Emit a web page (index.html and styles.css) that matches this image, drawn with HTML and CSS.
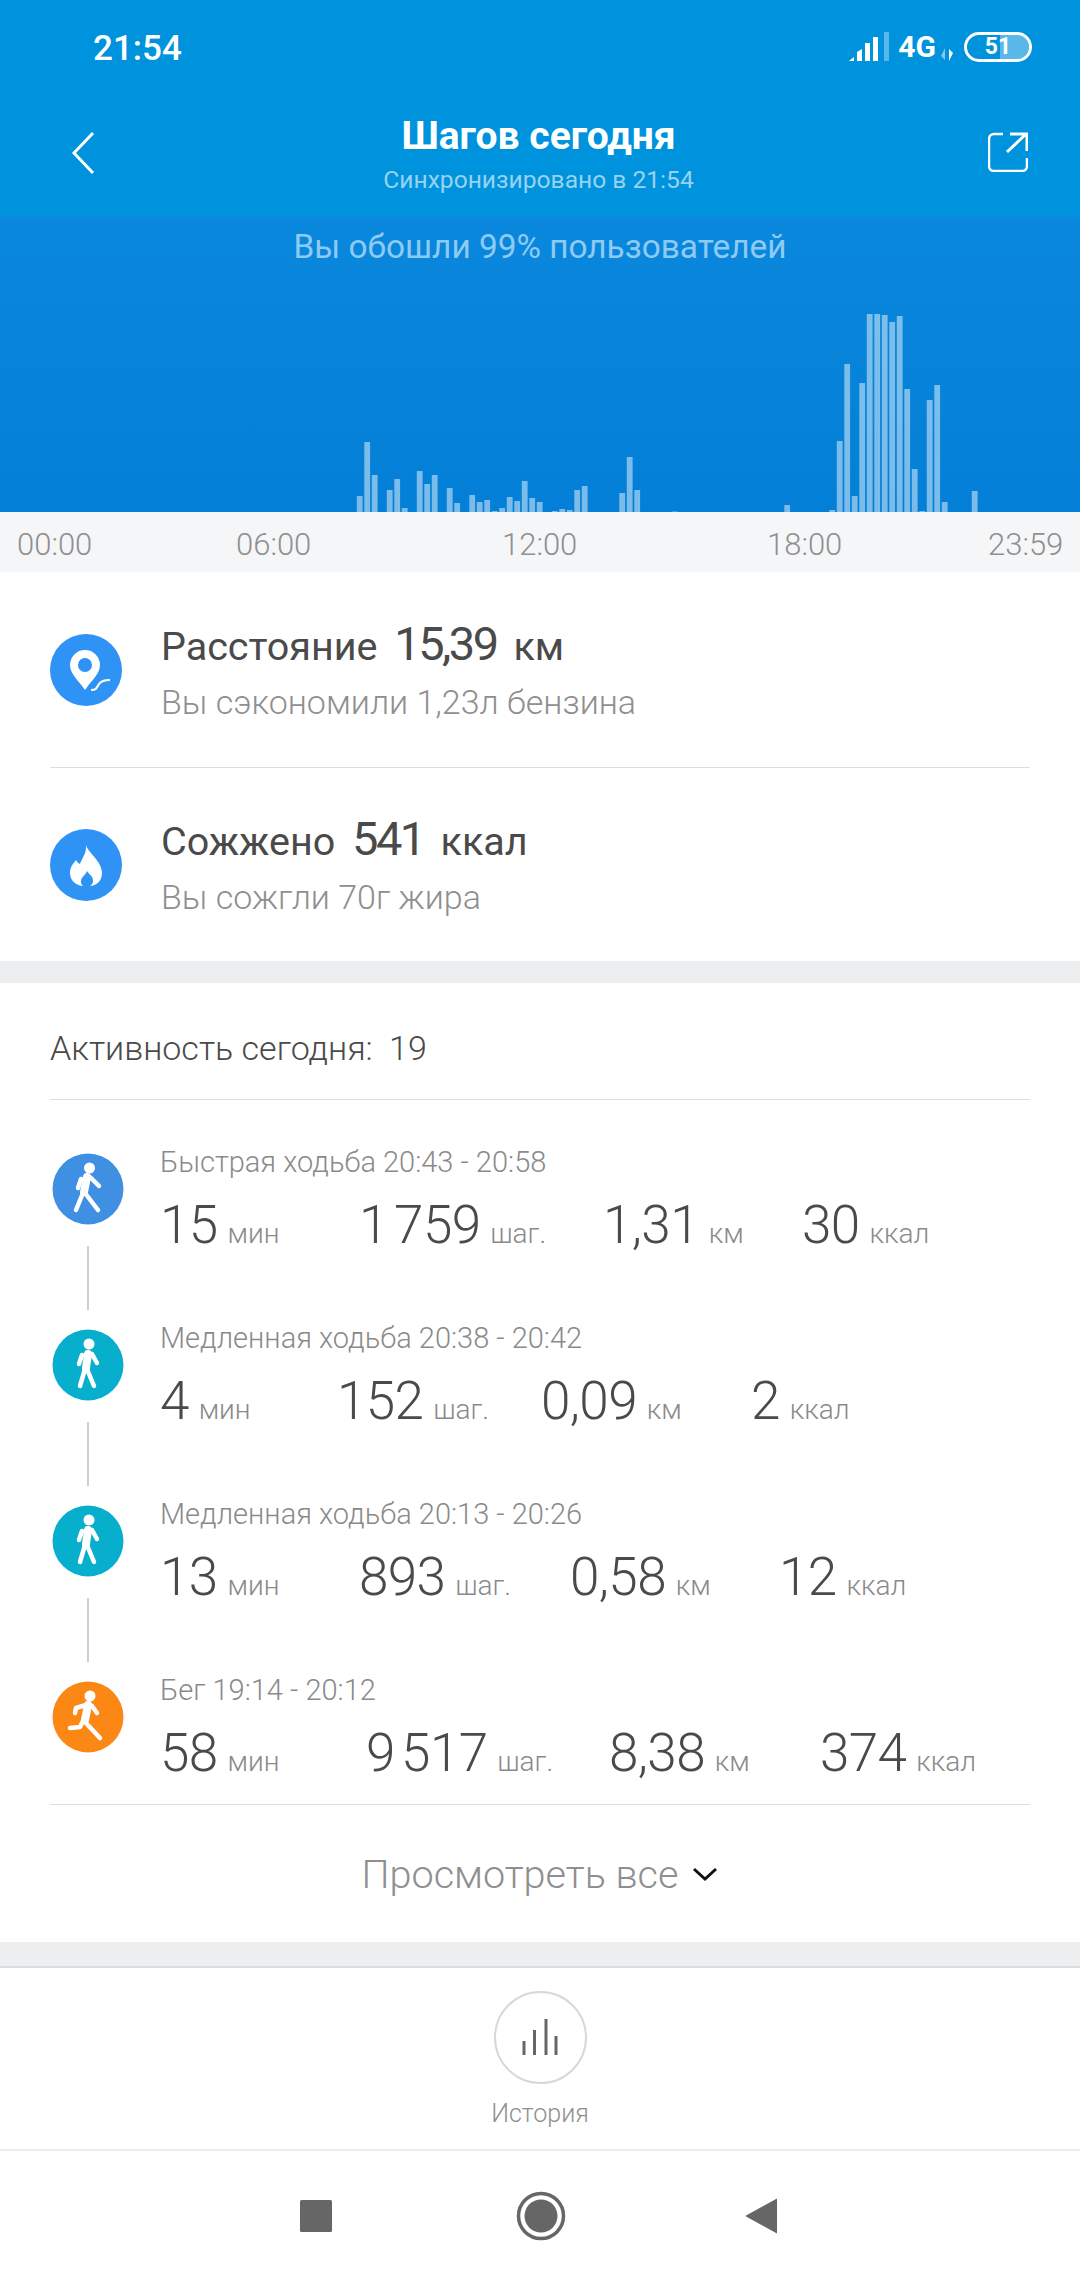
FILE: index.html
```html
<!DOCTYPE html>
<html lang="ru">
    <head>
        <meta charset="utf-8">
        <title>Шагов сегодня</title>
        <link rel="stylesheet" href="styles.css">
    </head>
    <body>
        <div id="top">
            <div class="status">
                <span class="clock">21:54</span>
                <div class="status-right">
                    <svg class="signal" width="40" height="30" viewBox="0 0 40 30">
                        <path d="M0 29h5v-4z" fill="#fff"/>
                        <path d="M8 29h5v-12l-5 3z" fill="#fff"/>
                        <rect x="16" y="11" width="5" height="18" fill="#fff"/>
                        <rect x="27" y="5" width="5" height="24" fill="#fff" transform="translate(-3 0)"/>
                        <rect x="35" y="0" width="5" height="29" fill="#fff" opacity=".35"/>
                    </svg>
                    <span class="net">4G</span>
                    <svg class="arrows" width="12" height="13" viewBox="0 0 12 13">
                        <path d="M4 0v12L0 8z" fill="#fff" opacity=".5"/>
                        <path d="M8 13V1l4 4z" fill="#fff"/>
                    </svg>
                    <div class="battery">
                        <span class="battery-fill"></span>
                        <span class="battery-num">51</span>
                    </div>
                </div>
            </div>
            <div class="title-bar">
                <svg class="back" width="24" height="44" viewBox="0 0 24 44">
                    <path d="M22 2L3 22l19 20" fill="none" stroke="#fff" stroke-width="3"/>
                </svg>
                <div class="title-text">
                    <h1>Шагов сегодня</h1>
                    <p>Синхронизировано в 21:54</p>
                </div>
                <svg class="share" width="40" height="40" viewBox="0 0 40 40">
                    <path d="M15 2H6a5 5 0 0 0-5 5v27a5 5 0 0 0 5 5h28a5 5 0 0 0 5-5v-8" fill="none" stroke="#fff" stroke-width="2.500"/>
                    <path d="M19 20L38 2M22 2h17v17" fill="none" stroke="#fff" stroke-width="3"/>
                </svg>
            </div>
        </div>

        <div id="chart">
            <p class="chart-note">Вы обошли 99% пользователей</p>
            <svg class="bars" width="1080" height="200" viewBox="0 0 1080 200">
                <g fill="#fff" fill-opacity=".47">
                    <rect x="356.8" y="184" width="5.8" height="16"/>
                    <rect x="364.3" y="130" width="5.8" height="70"/>
                    <rect x="371.8" y="163" width="5.8" height="37"/>
                    <rect x="386.8" y="178" width="5.8" height="22"/>
                    <rect x="394.3" y="167" width="5.8" height="33"/>
                    <rect x="401.8" y="196" width="5.8" height="4"/>
                    <rect x="416.8" y="159" width="5.8" height="41"/>
                    <rect x="424.3" y="172" width="5.8" height="28"/>
                    <rect x="431.8" y="163" width="5.8" height="37"/>
                    <rect x="446.8" y="176" width="5.8" height="24"/>
                    <rect x="454.3" y="191" width="5.8" height="9"/>
                    <rect x="469.3" y="183" width="5.8" height="17"/>
                    <rect x="476.8" y="190" width="5.8" height="10"/>
                    <rect x="484.3" y="188" width="5.8" height="12"/>
                    <rect x="491.8" y="199" width="5.8" height="1"/>
                    <rect x="499.3" y="196" width="5.8" height="4"/>
                    <rect x="506.8" y="185" width="5.8" height="15"/>
                    <rect x="514.3" y="189" width="5.8" height="11"/>
                    <rect x="521.8" y="169" width="5.8" height="31"/>
                    <rect x="529.3" y="186" width="5.8" height="14"/>
                    <rect x="536.8" y="190" width="5.8" height="10"/>
                    <rect x="551.8" y="199" width="5.8" height="1"/>
                    <rect x="559.3" y="197" width="5.8" height="3"/>
                    <rect x="566.8" y="198" width="5.8" height="2"/>
                    <rect x="574.3" y="178" width="5.8" height="22"/>
                    <rect x="581.8" y="174" width="5.8" height="26"/>
                    <rect x="619.3" y="181" width="5.8" height="19"/>
                    <rect x="626.8" y="145" width="5.8" height="55"/>
                    <rect x="634.3" y="178" width="5.8" height="22"/>
                    <rect x="671.8" y="199.500" width="5.8" height=".5"/>
                    <rect x="784.3" y="193" width="5.8" height="7"/>
                    <rect x="829.3" y="198" width="5.8" height="2"/>
                    <rect x="836.8" y="129" width="5.8" height="71"/>
                    <rect x="844.3" y="52" width="5.8" height="148"/>
                    <rect x="851.8" y="184" width="5.8" height="16"/>
                    <rect x="859.3" y="71" width="5.8" height="129"/>
                    <rect x="866.8" y="2" width="5.8" height="198"/>
                    <rect x="874.3" y="2" width="5.8" height="198"/>
                    <rect x="881.8" y="3" width="5.8" height="197"/>
                    <rect x="889.3" y="10" width="5.8" height="190"/>
                    <rect x="896.8" y="4" width="5.8" height="196"/>
                    <rect x="904.3" y="77" width="5.8" height="123"/>
                    <rect x="911.8" y="157" width="5.8" height="43"/>
                    <rect x="919.3" y="199" width="5.8" height="1"/>
                    <rect x="926.8" y="88" width="5.8" height="112"/>
                    <rect x="934.3" y="73" width="5.8" height="127"/>
                    <rect x="941.8" y="190" width="5.8" height="10"/>
                    <rect x="971.8" y="179" width="5.8" height="21"/>
                </g>
            </svg>
        </div>

        <div id="axis">
            <span>00:00</span>
            <span>06:00</span>
            <span>12:00</span>
            <span>18:00</span>
            <span>23:59</span>
        </div>

        <div class="card summary">
            <div class="summary-item">
                <svg class="summary-icon" width="72" height="72" viewBox="0 0 72 72">
                    <circle cx="36" cy="36" r="36" fill="#2f93f6"/>
                    <path d="M35 56C29 47 20 40 20 31a15 15 0 0 1 30 0C50 40 41 47 35 56zM35 38a7 7 0 1 0 0-14 7 7 0 0 0 0 14z" fill="#fff" fill-rule="evenodd"/>
                    <path d="M41 56c6 0 6-3 8-6s5-4 11-4" fill="none" stroke="#fff" stroke-width="2.2"/>
                </svg>
                <div>
                    <p class="summary-main">Расстояние <b>15,39</b> км</p>
                    <p class="summary-sub">Вы сэкономили 1,23л бензина</p>
                </div>
            </div>
            <div class="summary-item second">
                <svg class="summary-icon" width="72" height="72" viewBox="0 0 72 72">
                    <circle cx="36" cy="36" r="36" fill="#2f93f6"/>
                    <path d="M36 16c2 8 16 16 16 28 0 8-6 13-12 13 3-2 4-5 2-9-1-2-3-3-5-6-1 3-3 4-5 7-2 3-1 6 1 8-6 0-13-5-13-13 0-6 3-9 6-13 1 2 2 3 4 4 2-6 7-11 6-19z" fill="#fff"/>
                </svg>
                <div>
                    <p class="summary-main">Сожжено <b>541</b> ккал</p>
                    <p class="summary-sub">Вы сожгли 70г жира</p>
                </div>
            </div>
        </div>

        <div class="card activity">
            <div class="activity-head">Активность сегодня: <span>19</span></div>

            <div class="act-row">
                <div class="act-side">
                    <svg width="72" height="72" viewBox="0 0 72 72">
                        <circle cx="36" cy="36" r="35.500" fill="#3f8fe3"/>
                        <circle cx="37.500" cy="15" r="5.500" fill="#fff"/>
                        <path d="M35 24l-3 15" stroke="#fff" stroke-width="8" stroke-linecap="round"/>
                        <path d="M31 40L24 57M33 40l13 17M39 25l8 8M29 26l-3 9" fill="none" stroke="#fff" stroke-width="4.500" stroke-linecap="round"/>
                    </svg>
                    <i class="act-line"></i>
                </div>
                <div class="act-body">
                    <p class="act-title">Быстрая ходьба 20:43 - 20:58</p>
                    <div class="act-values cols-a">
                        <span><b>15</b> мин</span>
                        <span><b>1 759</b> шаг.</span>
                        <span><b>1,31</b> км</span>
                        <span><b>30</b> ккал</span>
                    </div>
                </div>
            </div>

            <div class="act-row">
                <div class="act-side">
                    <svg width="72" height="72" viewBox="0 0 72 72">
                        <circle cx="36" cy="36" r="35.500" fill="#07afcc"/>
                        <circle cx="37" cy="15" r="5.500" fill="#fff"/>
                        <path d="M36 25l-2 14" stroke="#fff" stroke-width="8" stroke-linecap="round"/>
                        <path d="M33 40L28 57M35 40l7 17M40 25l5 9M30 26l-3 9" fill="none" stroke="#fff" stroke-width="4.500" stroke-linecap="round"/>
                    </svg>
                    <i class="act-line"></i>
                </div>
                <div class="act-body">
                    <p class="act-title">Медленная ходьба 20:38 - 20:42</p>
                    <div class="act-values cols-b">
                        <span><b>4</b> мин</span>
                        <span><b>152</b> шаг.</span>
                        <span><b>0,09</b> км</span>
                        <span><b>2</b> ккал</span>
                    </div>
                </div>
            </div>

            <div class="act-row">
                <div class="act-side">
                    <svg width="72" height="72" viewBox="0 0 72 72">
                        <circle cx="36" cy="36" r="35.500" fill="#07afcc"/>
                        <circle cx="37" cy="15" r="5.500" fill="#fff"/>
                        <path d="M36 25l-2 14" stroke="#fff" stroke-width="8" stroke-linecap="round"/>
                        <path d="M33 40L28 57M35 40l7 17M40 25l5 9M30 26l-3 9" fill="none" stroke="#fff" stroke-width="4.500" stroke-linecap="round"/>
                    </svg>
                    <i class="act-line"></i>
                </div>
                <div class="act-body">
                    <p class="act-title">Медленная ходьба 20:13 - 20:26</p>
                    <div class="act-values cols-c">
                        <span><b>13</b> мин</span>
                        <span><b>893</b> шаг.</span>
                        <span><b>0,58</b> км</span>
                        <span><b>12</b> ккал</span>
                    </div>
                </div>
            </div>

            <div class="act-row last">
                <div class="act-side">
                    <svg width="72" height="72" viewBox="0 0 72 72">
                        <circle cx="36" cy="36" r="35.500" fill="#fb8814"/>
                        <circle cx="38" cy="15" r="5.500" fill="#fff"/>
                        <path d="M36 24l-3 15" stroke="#fff" stroke-width="8" stroke-linecap="round"/>
                        <path d="M33 41l15 16M32 38l-4 8-10 1M34 24l-10 3-1 5M40 25l5 7" fill="none" stroke="#fff" stroke-width="4.500" stroke-linecap="round" stroke-linejoin="round"/>
                    </svg>
                </div>
                <div class="act-body">
                    <p class="act-title">Бег 19:14 - 20:12</p>
                    <div class="act-values cols-d">
                        <span><b>58</b> мин</span>
                        <span><b>9 517</b> шаг.</span>
                        <span><b>8,38</b> км</span>
                        <span><b>374</b> ккал</span>
                    </div>
                </div>
            </div>

            <div class="more">
                <span>Просмотреть все</span>
                <svg width="26" height="15" viewBox="0 0 26 15">
                    <path d="M2 2l11 10L24 2" fill="none" stroke="#111" stroke-width="3"/>
                </svg>
            </div>
        </div>

        <div id="history">
            <div class="history-btn">
                <svg width="36" height="38" viewBox="0 0 36 38">
                    <path d="M2 37V23M12.500 37V12M24 37V1M34 37V18" fill="none" stroke="#666" stroke-width="3"/>
                </svg>
            </div>
            <span>История</span>
        </div>

        <div id="bottom">
            <svg width="32" height="32" viewBox="0 0 32 32">
                <rect width="32" height="32" rx="1.500" fill="#666"/>
            </svg>
            <svg width="50" height="50" viewBox="0 0 50 50">
                <circle cx="25" cy="25" r="22.500" fill="none" stroke="#666" stroke-width="3.500"/>
                <circle cx="25" cy="25" r="16.500" fill="#666"/>
            </svg>
            <svg width="32" height="36" viewBox="0 0 32 36">
                <path d="M32 1v34L1 18z" fill="#666" stroke="#666" stroke-linejoin="round"/>
            </svg>
        </div>
    </body>
</html>
```

FILE: styles.css
```css
*{
    margin: 0;
    box-sizing: border-box;
}
body{
    width: 1080px;
    height: 2280px;
    overflow: hidden;
    background-color: #eceeef;
    font-family: Roboto, "Noto Sans", sans-serif;
    color: #4a4a4a;
}
p{
    white-space: nowrap;
}

/*顶部*/
#top{
    height: 217px;
    background-color: #0093dd;
    color: #fff;
}
.status{
    height: 96px;
    padding: 31px 48px 0 93px;
    display: flex;
    justify-content: space-between;
    align-items: flex-start;
}
.clock{
    font-size: 35px;
    line-height: 36px;
    font-weight: 500;
}
.status-right{
    display: flex;
    align-items: flex-start;
    padding-top: 1px;
}
.net{
    margin-left: 9px;
    font-size: 30px;
    line-height: 30px;
    font-weight: 700;
}
.arrows{
    margin: 16px 0 0 5px;
}
.battery{
    position: relative;
    width: 68px;
    height: 30px;
    margin-left: 11px;
    border: 3px solid #fff;
    border-radius: 15px;
    overflow: hidden;
    text-align: center;
}
.battery-fill{
    position: absolute;
    left: 33px;
    top: 0;
    bottom: 0;
    width: 32px;
    background-color: rgba(255,255,255,.35);
}
.battery-num{
    position: relative;
    font-size: 23px;
    line-height: 24px;
    font-weight: 700;
}
.title-bar{
    padding: 0 52px 0 71px;
    display: flex;
    justify-content: space-between;
    align-items: flex-start;
}
.back{
    margin-top: 35px;
}
.share{
    margin-top: 36px;
}
.title-text{
    margin-right: 6px;
    text-align: center;
}
.title-text h1{
    font-size: 39px;
    line-height: 42px;
    font-weight: 700;
    margin-top: 19px;
}
.title-text p{
    font-size: 24.6px;
    line-height: 30px;
    margin-top: 8px;
    color: #98d2f2;
}

/*图表*/
#chart{
    height: 295px;
    padding-top: 13px;
    background: linear-gradient(#0a88dd, #047fd7);
    display: flex;
    flex-direction: column;
    justify-content: space-between;
    overflow: hidden;
}
.chart-note{
    font-size: 33.4px;
    line-height: 34px;
    text-align: center;
    color: #8ecbf3;
}
.bars{
    display: block;
}
#axis{
    height: 60px;
    padding: 16px 0 0 17px;
    background-color: #f5f6f8;
    display: grid;
    grid-template-columns: 219px 266px 265px 221px auto;
    font-size: 31px;
    line-height: 34px;
    font-weight: 300;
    color: #8f8f8f;
}

/*距离和热量*/
.card{
    background-color: #fff;
}
.summary{
    height: 389px;
    padding: 0 50px;
}
.summary-item{
    height: 196px;
    display: flex;
    align-items: center;
    gap: 39px;
    border-bottom: 1px solid #dedede;
}
.summary-item.second{
    height: 193px;
    border-bottom: 0;
}
.summary-main{
    font-size: 39.5px;
    line-height: 54px;
    color: #4a4a4a;
}
.summary-main b{
    font-size: 47px;
    font-weight: 400;
    letter-spacing: -2.5px;
    margin: 0 7px 0 7px;
}
.summary-sub{
    font-size: 34px;
    line-height: 40px;
    margin-top: 8px;
    font-weight: 300;
    color: #8f8f8f;
}

/*活动*/
.activity{
    margin-top: 22px;
    height: 959px;
    padding: 0 50px;
}
.activity-head{
    height: 117px;
    margin-bottom: 53px;
    padding-top: 47px;
    font-size: 34px;
    line-height: 36px;
    font-weight: 300;
    border-bottom: 1px solid #dedede;
    color: #4a4a4a;
}
.activity-head span{
    margin-left: 8px;
}
.act-row{
    height: 176px;
    display: flex;
    gap: 36px;
    padding-left: 2px;
}
.act-row.last{
    height: 123px;
}
.act-side{
    flex: none;
    width: 72px;
    display: flex;
    flex-direction: column;
    align-items: center;
}
.act-side svg{
    flex: none;
}
.act-line{
    display: block;
    flex: none;
    width: 2px;
    height: 64px;
    margin-top: 21px;
    background-color: #cdcdcd;
}
.act-body{
    margin-top: -7px;
}
.act-title{
    font-size: 29px;
    line-height: 32px;
    font-weight: 300;
    color: #8a8a8a;
}
.act-values{
    display: grid;
    margin-top: 16px;
    white-space: nowrap;
    font-size: 28px;
    font-weight: 300;
    line-height: 62px;
    color: #8a8a8a;
}
.act-values b{
    font-size: 53px;
    font-weight: 300;
    letter-spacing: -.6px;
    word-spacing: -6px;
    color: #4a4a4a;
    margin-right: 3px;
}
.cols-a{
    grid-template-columns: 199px 244px 199px auto;
}
.cols-b{
    grid-template-columns: 177px 204px 210px auto;
}
.cols-c{
    grid-template-columns: 199px 211px 209px auto;
}
.cols-d{
    grid-template-columns: 206px 243px 211px auto;
}
.more{
    height: 138px;
    padding-top: 2px;
    border-top: 1px solid #dedede;
    display: flex;
    justify-content: center;
    align-items: center;
    gap: 14px;
    font-size: 39.6px;
    font-weight: 300;
    color: #8f8f8f;
}

/*历史*/
#history{
    margin-top: 24px;
    height: 185px;
    background-color: #fff;
    border-top: 2px solid #dcdcdc;
    border-bottom: 2px solid #ececec;
    display: flex;
    flex-direction: column;
    align-items: center;
    padding-top: 23px;
    font-size: 25px;
    line-height: 30px;
    font-weight: 300;
    color: #8f8f8f;
}
.history-btn{
    width: 93px;
    height: 93px;
    margin-bottom: 15px;
    border: 2px solid #d8d8d8;
    border-radius: 50%;
    display: flex;
    justify-content: center;
    padding-top: 25px;
}
#bottom{
    height: 130px;
    padding-left: 300px;
    background-color: #fff;
    display: grid;
    grid-template-columns: 216px 229px auto;
    align-items: center;
}
```
